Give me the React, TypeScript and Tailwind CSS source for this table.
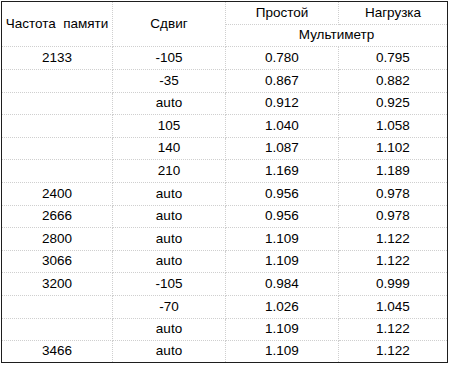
import React from 'react';

const rows: [string, string, string, string][] = [
  ['2133', '-105', '0.780', '0.795'],
  ['', '-35', '0.867', '0.882'],
  ['', 'auto', '0.912', '0.925'],
  ['', '105', '1.040', '1.058'],
  ['', '140', '1.087', '1.102'],
  ['', '210', '1.169', '1.189'],
  ['2400', 'auto', '0.956', '0.978'],
  ['2666', 'auto', '0.956', '0.978'],
  ['2800', 'auto', '1.109', '1.122'],
  ['3066', 'auto', '1.109', '1.122'],
  ['3200', '-105', '0.984', '0.999'],
  ['', '-70', '1.026', '1.045'],
  ['', 'auto', '1.109', '1.122'],
  ['3466', 'auto', '1.109', '1.122'],
];

const cell = 'flex items-center justify-center border-[#cfcfcf] border-dotted';

const App: React.FC = () => {
  return (
    <div className="w-[450px] h-[365px] bg-white pt-px pl-px">
      <div
        className="w-[447px] border border-[#1e1e1e] grid grid-cols-[111px_113px_113px_108px] grid-rows-[23px_22px_23px_23px_22px_23px_22px_23px_23px_22px_23px_22px_23px_23px_22px_21px] text-[13.5px] text-black"
        style={{ fontFamily: '"Liberation Sans", Arial, sans-serif' }}
      >
        {/* header */}
        <div className={`${cell} row-span-2 border-r border-b whitespace-pre`}>Частота  памяти</div>
        <div className={`${cell} row-span-2 border-r border-b`}>Сдвиг</div>
        <div className={`${cell} border-r border-b`}>Простой</div>
        <div className={`${cell} border-b`}>Нагрузка</div>
        <div className={`${cell} col-span-2 border-b`}>Мультиметр</div>

        {rows.map((r, i) => {
          const last = i === rows.length - 1;
          return r.map((v, j) => (
            <div
              key={`${i}-${j}`}
              className={`${cell} ${j < 3 ? 'border-r' : ''} ${last ? '' : 'border-b'}`}
            >
              {v}
            </div>
          ));
        })}
      </div>
    </div>
  );
};

export default App;
